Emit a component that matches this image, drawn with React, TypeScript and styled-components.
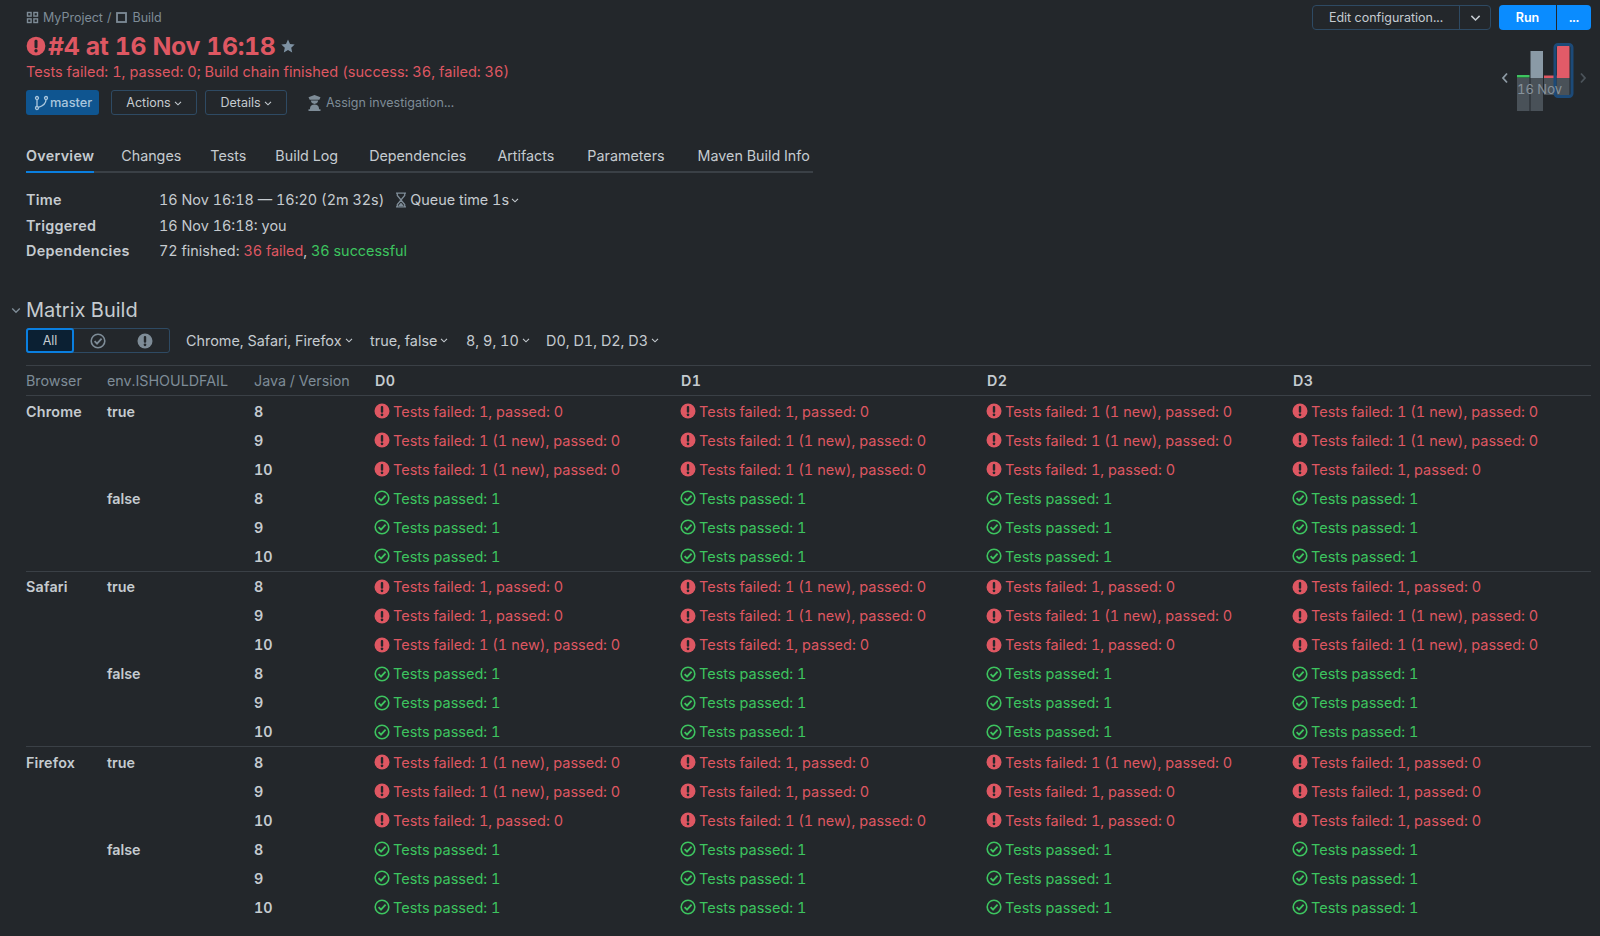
import React from "react";
import styled, { createGlobalStyle } from "styled-components";

const GlobalStyle = createGlobalStyle`
  html, body {
    margin: 0;
    padding: 0;
    background: #23272b;
    color: #c5cbd0;
    font-family: Inter, "Liberation Sans", sans-serif;
    font-size: 14.3px;
    font-variant-numeric: tabular-nums;
  }
`;

const RED = "#de5762";
const GREEN = "#3dc45f";
const MUTED = "#7e8c97";

const Page = styled.div`
  width: 1600px;
  height: 936px;
  overflow: hidden;
  box-sizing: border-box;
  padding: 0 9px 0 26px;
  display: flex;
  flex-direction: column;
`;

const Header = styled.div`
  display: flex;
  justify-content: space-between;
`;

const HeaderLeft = styled.div`
  display: flex;
  flex-direction: column;
  padding-top: 8px;
`;

const Breadcrumb = styled.div`
  display: flex;
  align-items: center;
  gap: 4px;
  height: 19px;
  font-size: 12.5px;
  color: ${MUTED};
`;

const Title = styled.h1`
  display: flex;
  align-items: center;
  margin: 3px 0 0;
  height: 32px;
  font-size: 24.8px;
  font-weight: 700;
  letter-spacing: -0.35px;
  color: ${RED};
  gap: 2px;
`;

const StatusLine = styled.div`
  height: 20px;
  line-height: 20px;
  font-size: 14.56px;
  color: ${RED};
`;

const ActionRow = styled.div`
  display: flex;
  align-items: center;
  margin-top: 8px;
  height: 25px;
  font-size: 12.5px;
`;

const BranchBadge = styled.div`
  display: flex;
  align-items: center;
  gap: 1px;
  box-sizing: border-box;
  width: 73px;
  height: 25px;
  padding-left: 8px;
  border-radius: 3px;
  background: #0f5590;
  color: #a9c6dd;
  font-size: 12.8px;
  font-weight: 500;
`;

const OutlineButton = styled.button<{ $width: number; $left: number }>`
  display: flex;
  align-items: center;
  justify-content: center;
  gap: 3px;
  box-sizing: border-box;
  width: ${(p) => p.$width}px;
  height: 25px;
  margin-left: ${(p) => p.$left}px;
  border: 1px solid #2e4a63;
  border-radius: 3px;
  background: transparent;
  color: #c5cbd0;
  font: inherit;
`;

const Assign = styled.div`
  display: flex;
  align-items: center;
  gap: 4px;
  margin-left: 20px;
  color: ${MUTED};
`;

const HeaderRight = styled.div`
  display: flex;
  flex-direction: column;
  align-items: flex-end;
  padding-top: 5px;
`;

const RunControls = styled.div`
  display: flex;
  align-items: center;
  font-size: 12.5px;
`;

const EditGroup = styled.div`
  display: flex;
  box-sizing: border-box;
  width: 179px;
  height: 25px;
  border: 1px solid #2e4a63;
  border-radius: 4px;
  margin-right: 8px;
`;

const EditLabel = styled.div`
  flex: 1;
  display: flex;
  align-items: center;
  justify-content: center;
  color: #c5cbd0;
`;

const EditCaret = styled.div`
  width: 30px;
  display: flex;
  align-items: center;
  justify-content: center;
  border-left: 1px solid #2e4a63;
  color: #c5cbd0;
`;

const RunButton = styled.div<{ $width: number; $radius: string }>`
  display: flex;
  align-items: center;
  justify-content: center;
  width: ${(p) => p.$width}px;
  height: 25px;
  background: #0a8cff;
  border-radius: ${(p) => p.$radius};
  color: #fff;
  font-weight: 600;
  & + & {
    margin-left: 1px;
  }
`;

const ChartSvg = styled.svg`
  display: block;
  margin: 10px -9px 0 0;
`;

const Tabs = styled.div`
  display: flex;
  width: 787px;
  margin-top: 25px;
  height: 30px;
  border-bottom: 2px solid #3a4046;
`;

const Tab = styled.div<{ $active?: boolean; $left: number }>`
  height: 30px;
  margin-left: ${(p) => p.$left}px;
  line-height: 30px;
  font-weight: ${(p) => (p.$active ? 600 : 400)};
  letter-spacing: ${(p) => (p.$active ? "0.3px" : "0")};
  border-bottom: 2px solid ${(p) => (p.$active ? "#0a7fe0" : "transparent")};
  color: #c5cbd0;
`;

const Info = styled.div`
  display: grid;
  grid-template-columns: 133px 1fr;
  grid-auto-rows: 25.5px;
  margin-top: 14px;
  align-items: center;
  font-size: 14.4px;
`;

const InfoLabel = styled.div`
  font-weight: 600;
  letter-spacing: 0.3px;
`;

const InfoValue = styled.div`
  display: flex;
  align-items: center;
  white-space: pre;
`;

const Coloured = styled.span<{ $color: string }>`
  color: ${(p) => p.$color};
`;

const Section = styled.div`
  margin-top: 32px;
  margin-left: -15px;
  display: flex;
  align-items: center;
  gap: 5px;
  height: 28px;
  font-size: 20px;
  color: #c5cbd0;
`;

const FilterBar = styled.div`
  display: flex;
  align-items: center;
  margin-top: 4px;
  height: 25px;
  font-size: 14.4px;
`;

const Segments = styled.div`
  display: flex;
  box-sizing: border-box;
  width: 144px;
  height: 25px;
  border: 1px solid #2e4a63;
  border-radius: 3px;
  margin-right: 16px;
`;

const SegmentAll = styled.div`
  box-sizing: border-box;
  width: 48px;
  height: 25px;
  margin: -1px 0 0 -1px;
  border: 2px solid #0a7fe0;
  border-radius: 3px;
  background: #0b2033;
  display: flex;
  align-items: center;
  justify-content: center;
  font-size: 12.5px;
`;

const SegmentIcon = styled.div`
  flex: 1;
  display: flex;
  align-items: center;
  justify-content: center;
  padding-top: 1px;
`;

const Filter = styled.div<{ $width: number }>`
  display: flex;
  align-items: center;
  gap: 3px;
  width: ${(p) => p.$width}px;
  white-space: nowrap;
`;

const Matrix = styled.div`
  margin-top: 12px;
  border-top: 1px solid #3a4046;
`;

const gridColumns = "81px 147px 120px 306px 306px 306px 1fr";

const HeadRow = styled.div`
  display: grid;
  grid-template-columns: ${gridColumns};
  align-items: center;
  height: 29px;
  margin-bottom: 1px;
  border-bottom: 1px solid #3a4046;
`;

const HeadCell = styled.div<{ $strong?: boolean }>`
  color: ${(p) => (p.$strong ? "#c5cbd0" : MUTED)};
  font-weight: ${(p) => (p.$strong ? 600 : 400)};
  letter-spacing: ${(p) => (p.$strong ? "0.4px" : "0")};
  padding-left: ${(p) => (p.$strong ? "1px" : "0")};
`;

const Group = styled.div`
  & + & {
    border-top: 1px solid #3a4046;
    padding-top: 0.5px;
  }
`;

const Row = styled.div`
  display: grid;
  grid-template-columns: ${gridColumns};
  align-items: center;
  height: 29px;
`;

const RowName = styled.div`
  font-weight: 600;
  letter-spacing: 0.2px;
`;

const RowValue = styled.div`
  font-weight: 600;
`;

const ResultCell = styled.div<{ $ok: boolean }>`
  display: flex;
  align-items: center;
  gap: 3px;
  font-size: 14.5px;
  color: ${(p) => (p.$ok ? GREEN : RED)};
  white-space: nowrap;
`;

const ErrorIcon = ({ size = 16, color = RED }: { size?: number; color?: string }) => (
  <svg width={size} height={size} viewBox="0 0 16 16" style={{ flex: "none" }}>
    <circle cx="8" cy="8" r="7.5" fill={color} />
    <rect x="6.800" y="3" width="2.400" height="6.800" rx="1.100" fill="#23272b" />
    <circle cx="8" cy="11.800" r="1.350" fill="#23272b" />
  </svg>
);

const CheckIcon = ({ color = GREEN }: { color?: string }) => (
  <svg width="16" height="16" viewBox="0 0 16 16" fill="none" stroke={color} strokeWidth="1.600" style={{ flex: "none" }}>
    <circle cx="8" cy="8" r="6.800" />
    <path d="M4.600 8.200l2.400 2.500 4.600-5" strokeWidth="1.800" />
  </svg>
);

const Caret = ({ size = 8, color = "currentColor" }: { size?: number; color?: string }) => (
  <svg width={size} height={size} viewBox="0 0 8 8" fill="none" stroke={color} strokeWidth="1.100" style={{ flex: "none" }}>
    <path d="M1 2.800l3 3 3-3" />
  </svg>
);

const ProjectIcon = () => (
  <svg width="13" height="13" viewBox="0 0 13 13" fill="none" stroke={MUTED} strokeWidth="1.400">
    <rect x="1.500" y="1.500" width="3.600" height="3.600" />
    <rect x="7.900" y="1.500" width="3.600" height="3.600" />
    <rect x="1.500" y="7.900" width="3.600" height="3.600" />
    <rect x="7.900" y="7.900" width="3.600" height="3.600" />
  </svg>
);

const BuildIcon = () => (
  <svg width="13" height="13" viewBox="0 0 13 13" fill="none" stroke={MUTED} strokeWidth="1.800">
    <rect x="2" y="2" width="9" height="9" />
  </svg>
);

const StarIcon = () => (
  <svg width="16" height="16" viewBox="0 0 16 16" fill="#7e92a3" style={{ marginLeft: 3 }}>
    <path d="M8 1.600l2 4.400 4.700.5-3.500 3.200 1 4.700L8 12l-4.200 2.400 1-4.700L1.300 6.500 6 6z" />
  </svg>
);

const BranchIcon = () => (
  <svg width="15" height="16" viewBox="0 0 15 16" fill="none" stroke="#a9c6dd" strokeWidth="1.300">
    <circle cx="3" cy="3" r="1.500" />
    <circle cx="3" cy="13" r="1.500" />
    <circle cx="12" cy="3" r="1.500" />
    <path d="M3 4.500v7M12 4.500c0 4-3 6.500-7.600 7.800" />
  </svg>
);

const InvestigatorIcon = () => (
  <svg width="15" height="17" viewBox="0 0 15 17" fill={MUTED}>
    <path d="M1.500 3.200L7.500 1l6 2.200-1.200 2.600H2.700z" />
    <path d="M3.800 6.600h7.400c-.2 2-1.700 3.300-3.700 3.300S4 8.600 3.800 6.600z" />
    <path d="M3 16v-1.500c0-2.400 2-3.900 4.500-3.900s4.500 1.500 4.500 3.900V16zM1.500 15.300h12V17h-12z" />
  </svg>
);

const HourglassIcon = () => (
  <svg width="12" height="16" viewBox="0 0 12 16" fill="none" stroke={MUTED} strokeWidth="1.300" style={{ marginRight: 3 }}>
    <path d="M1 1.200h10M1 14.800h10M2.300 1.200v2.300L6 8l3.700-4.500V1.200M2.300 14.800v-2.300L6 8l3.700 4.500v2.300" />
    <path d="M3.200 14h5.600L6 10.500z" fill={MUTED} stroke="none" />
  </svg>
);

const HistoryChart = () => (
  <ChartSvg width="100" height="76" viewBox="1500 40 100 76">
    <path d="M1507 73.500l-4 4.500 4 4.500" fill="none" stroke="#8d9aa4" strokeWidth="1.800" />
    <path d="M1581 73.500l4 4.500-4 4.500" fill="none" stroke="#4b535a" strokeWidth="1.800" />
    <rect x="1517" y="78" width="12.500" height="33" fill="#495158" />
    <rect x="1517" y="75" width="12.500" height="2.500" fill={GREEN} />
    <rect x="1530.500" y="51" width="12.500" height="27" fill="#8a9aa6" />
    <rect x="1530.500" y="78" width="12.500" height="33" fill="#495158" />
    <rect x="1544" y="75.500" width="12.500" height="2.500" fill={RED} />
    <rect x="1544" y="78" width="12.500" height="17" fill="#495158" />
    <rect x="1557" y="46" width="12.500" height="32" fill="#e25b68" />
    <rect x="1557" y="78" width="12.500" height="17" fill="#495158" />
    <rect x="1555" y="44.500" width="17" height="52" rx="3" fill="none" stroke="#1c4a78" strokeWidth="3" />
    <text x="1517" y="94" fontSize="13" fontFamily="Inter, sans-serif" fill="#87929b">
      16 Nov
    </text>
  </ChartSvg>
);

type Result = "a" | "b" | "p";
const F1: Result = "a"; // failed, nothing new
const FN: Result = "b"; // failed, one new
const P: Result = "p";

const resultText = {
  a: "Tests failed: 1, passed: 0",
  b: "Tests failed: 1 (1 new), passed: 0",
  p: "Tests passed: 1",
};

const passRows: Result[][] = [
  [P, P, P, P],
  [P, P, P, P],
  [P, P, P, P],
];

const browsers: { name: string; failing: Result[][] }[] = [
  {
    name: "Chrome",
    failing: [
      [F1, F1, FN, FN],
      [FN, FN, FN, FN],
      [FN, FN, F1, F1],
    ],
  },
  {
    name: "Safari",
    failing: [
      [F1, FN, F1, F1],
      [F1, FN, FN, FN],
      [FN, F1, F1, FN],
    ],
  },
  {
    name: "Firefox",
    failing: [
      [FN, F1, FN, F1],
      [FN, F1, F1, F1],
      [F1, FN, F1, F1],
    ],
  },
];

const versions = ["8", "9", "10"];

const tabs = [
  { label: "Overview", left: 0, active: true },
  { label: "Changes", left: 27 },
  { label: "Tests", left: 29 },
  { label: "Build Log", left: 29 },
  { label: "Dependencies", left: 31 },
  { label: "Artifacts", left: 31 },
  { label: "Parameters", left: 33 },
  { label: "Maven Build Info", left: 33 },
];

const App = () => {
  return (
    <Page>
      <GlobalStyle />
      <Header>
        <HeaderLeft>
          <Breadcrumb>
            <ProjectIcon />
            <span>MyProject</span>
            <span>/</span>
            <BuildIcon />
            <span>Build</span>
          </Breadcrumb>
          <Title>
            <ErrorIcon size={20} />
            #4 at 16 Nov 16:18
            <StarIcon />
          </Title>
          <StatusLine>Tests failed: 1, passed: 0; Build chain finished (success: 36, failed: 36)</StatusLine>
          <ActionRow>
            <BranchBadge>
              <BranchIcon />
              master
            </BranchBadge>
            <OutlineButton $width={86} $left={12}>
              Actions
              <Caret />
            </OutlineButton>
            <OutlineButton $width={82} $left={8}>
              Details
              <Caret />
            </OutlineButton>
            <Assign>
              <InvestigatorIcon />
              Assign investigation...
            </Assign>
          </ActionRow>
        </HeaderLeft>
        <HeaderRight>
          <RunControls>
            <EditGroup>
              <EditLabel>Edit configuration...</EditLabel>
              <EditCaret>
                <Caret size={11} />
              </EditCaret>
            </EditGroup>
            <RunButton $width={57} $radius="4px 0 0 4px">
              Run
            </RunButton>
            <RunButton $width={34} $radius="0 4px 4px 0">
              ...
            </RunButton>
          </RunControls>
          <HistoryChart />
        </HeaderRight>
      </Header>
      <Tabs>
        {tabs.map((t) => (
          <Tab key={t.label} $active={t.active} $left={t.left}>
            {t.label}
          </Tab>
        ))}
      </Tabs>
      <Info>
        <InfoLabel>Time</InfoLabel>
        <InfoValue>
          16 Nov 16:18 — 16:20 (2m 32s)
          <span style={{ width: 11 }} />
          <HourglassIcon />
          Queue time 1s
          <span style={{ width: 2 }} />
          <Caret />
        </InfoValue>
        <InfoLabel>Triggered</InfoLabel>
        <InfoValue>16 Nov 16:18: you</InfoValue>
        <InfoLabel>Dependencies</InfoLabel>
        <InfoValue>
          72 finished: <Coloured $color={RED}>36 failed</Coloured>, <Coloured $color={GREEN}>36 successful</Coloured>
        </InfoValue>
      </Info>
      <Section>
        <Caret size={10} color={MUTED} />
        Matrix Build
      </Section>
      <FilterBar>
        <Segments>
          <SegmentAll>All</SegmentAll>
          <SegmentIcon>
            <CheckIcon color={MUTED} />
          </SegmentIcon>
          <SegmentIcon>
            <ErrorIcon color={MUTED} />
          </SegmentIcon>
        </Segments>
        <Filter $width={184}>
          Chrome, Safari, Firefox
          <Caret />
        </Filter>
        <Filter $width={96}>
          true, false
          <Caret />
        </Filter>
        <Filter $width={80}>
          8, 9, 10
          <Caret />
        </Filter>
        <Filter $width={120}>
          D0, D1, D2, D3
          <Caret />
        </Filter>
      </FilterBar>
      <Matrix>
        <HeadRow>
          <HeadCell>Browser</HeadCell>
          <HeadCell>env.ISHOULDFAIL</HeadCell>
          <HeadCell>Java / Version</HeadCell>
          <HeadCell $strong>D0</HeadCell>
          <HeadCell $strong>D1</HeadCell>
          <HeadCell $strong>D2</HeadCell>
          <HeadCell $strong>D3</HeadCell>
        </HeadRow>
        {browsers.map((b) => (
          <Group key={b.name}>
            {[...b.failing, ...passRows].map((cells, i) => (
              <Row key={i}>
                <RowName>{i === 0 ? b.name : ""}</RowName>
                <RowValue>{i === 0 ? "true" : i === 3 ? "false" : ""}</RowValue>
                <RowValue>{versions[i % 3]}</RowValue>
                {cells.map((c, j) => (
                  <ResultCell key={j} $ok={c === P}>
                    {c === P ? <CheckIcon /> : <ErrorIcon />}
                    {resultText[c]}
                  </ResultCell>
                ))}
              </Row>
            ))}
          </Group>
        ))}
      </Matrix>
    </Page>
  );
};

export default App;
